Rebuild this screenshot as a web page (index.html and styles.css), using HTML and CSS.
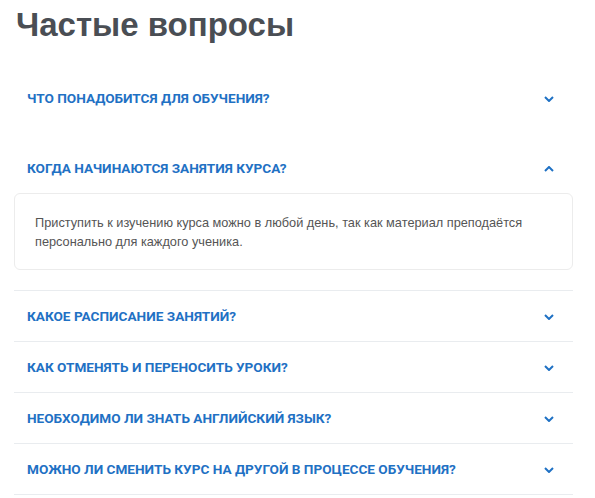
FILE: index.html
```html
<!DOCTYPE html>
<html lang="ru">
<head>
<meta charset="utf-8">
<link rel="stylesheet" href="styles.css">
</head>
<body>
<section class="faq">
  <h1 class="faq-title">Частые вопросы</h1>
  <div class="faq-list">
    <div class="faq-item faq-item--first">
      <div class="faq-head"><span class="faq-q">ЧТО ПОНАДОБИТСЯ ДЛЯ ОБУЧЕНИЯ?</span>
        <svg class="chev" width="10" height="6" viewBox="0 0 10 6"><path d="M1 1l4 4 4-4" fill="none" stroke="currentColor" stroke-width="2"/></svg></div>
    </div>
    <div class="faq-item faq-item--open">
      <div class="faq-head"><span class="faq-q">КОГДА НАЧИНАЮТСЯ ЗАНЯТИЯ КУРСА?</span>
        <svg class="chev" width="10" height="6" viewBox="0 0 10 6"><path d="M1 5l4-4 4 4" fill="none" stroke="currentColor" stroke-width="2"/></svg></div>
      <div class="faq-body">Приступить к изучению курса можно в любой день, так как материал преподаётся персонально для каждого ученика.</div>
    </div>
    <div class="faq-item">
      <div class="faq-head"><span class="faq-q">КАКОЕ РАСПИСАНИЕ ЗАНЯТИЙ?</span>
        <svg class="chev" width="10" height="6" viewBox="0 0 10 6"><path d="M1 1l4 4 4-4" fill="none" stroke="currentColor" stroke-width="2"/></svg></div>
    </div>
    <div class="faq-item">
      <div class="faq-head"><span class="faq-q">КАК ОТМЕНЯТЬ И ПЕРЕНОСИТЬ УРОКИ?</span>
        <svg class="chev" width="10" height="6" viewBox="0 0 10 6"><path d="M1 1l4 4 4-4" fill="none" stroke="currentColor" stroke-width="2"/></svg></div>
    </div>
    <div class="faq-item">
      <div class="faq-head"><span class="faq-q">НЕОБХОДИМО ЛИ ЗНАТЬ АНГЛИЙСКИЙ ЯЗЫК?</span>
        <svg class="chev" width="10" height="6" viewBox="0 0 10 6"><path d="M1 1l4 4 4-4" fill="none" stroke="currentColor" stroke-width="2"/></svg></div>
    </div>
    <div class="faq-item">
      <div class="faq-head"><span class="faq-q">МОЖНО ЛИ СМЕНИТЬ КУРС НА ДРУГОЙ В ПРОЦЕССЕ ОБУЧЕНИЯ?</span>
        <svg class="chev" width="10" height="6" viewBox="0 0 10 6"><path d="M1 1l4 4 4-4" fill="none" stroke="currentColor" stroke-width="2"/></svg></div>
    </div>
  </div>
</section>
</body>
</html>
```
FILE: styles.css
```css
html, body {
  margin: 0;
  padding: 0;
  background: #ffffff;
}
.faq {
  width: 559px;
  padding-left: 14px;
}
.faq-title {
  margin: 0;
  padding: 5px 0 0 2px;
  height: 73px;
  box-sizing: border-box;
  font-family: "Liberation Sans", Arial, sans-serif;
  font-weight: bold;
  font-size: 33px;
  line-height: 40px;
  color: #4a4e54;
}
.faq-item {
  border-bottom: 1px solid #e9ecef;
}
.faq-item--first {
  border-bottom: none;
  padding-bottom: 20px;
}
.faq-item--open {
  padding-bottom: 20px;
}
.faq-head {
  height: 50px;
  display: flex;
  align-items: center;
  justify-content: space-between;
  padding: 0 19px 0 13px;
  color: #1f71c4;
}
.faq-q {
  font-family: Roboto, "Liberation Sans", sans-serif;
  font-weight: 700;
  font-size: 13.6px;
  color: #1f71c4;
}
.chev {
  display: block;
  margin-top: 1px;
}
.faq-body {
  border: 1px solid #ececec;
  border-radius: 6px;
  padding: 19px 20px 18px 20px;
  font-family: "Liberation Sans", Arial, sans-serif;
  font-size: 12.75px;
  line-height: 19px;
  color: #555555;
}
```
